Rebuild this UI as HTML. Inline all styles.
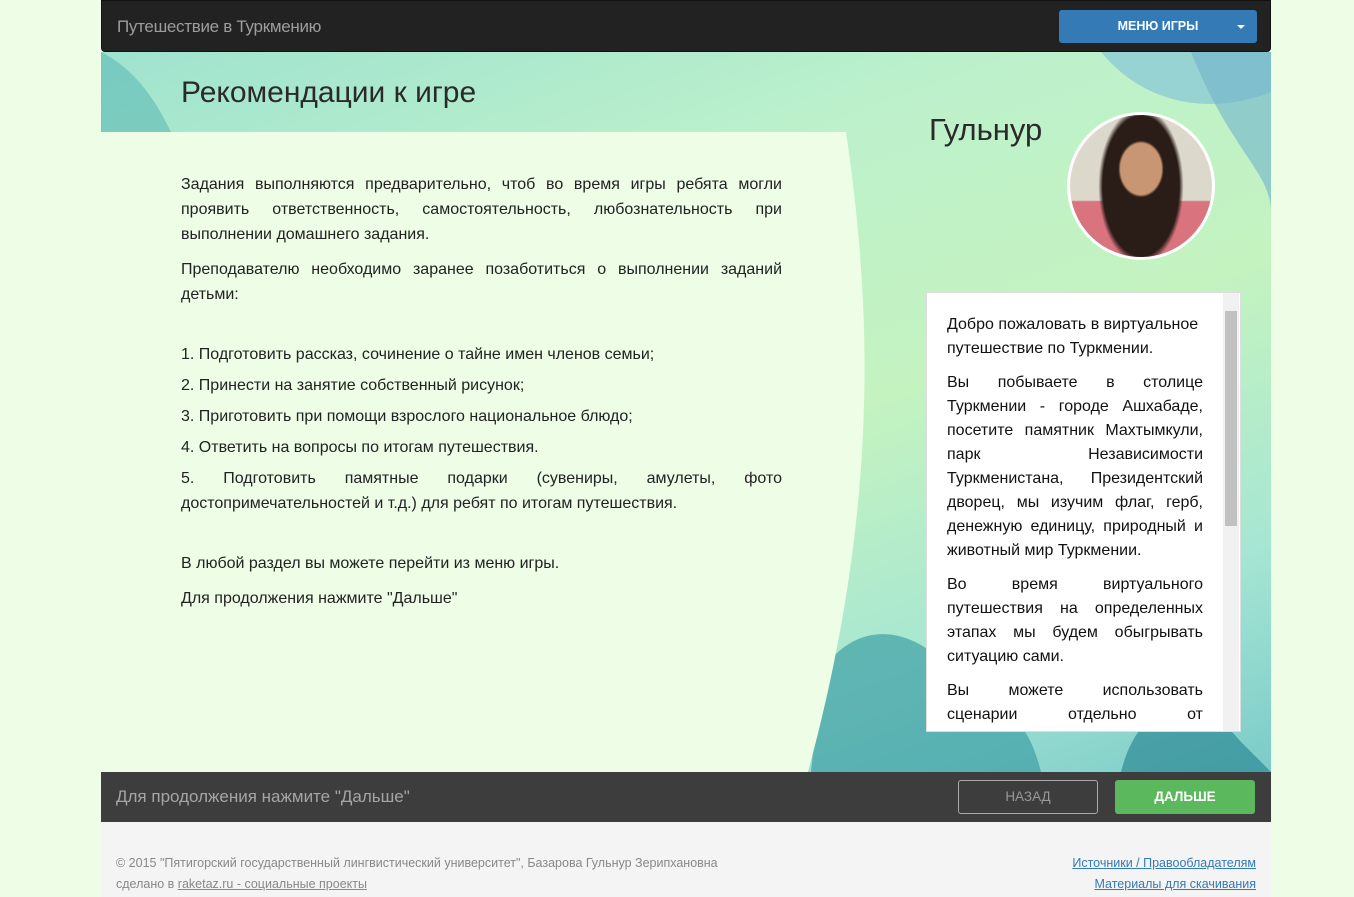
<!DOCTYPE html>
<html><head><meta charset="utf-8"><style>
*{margin:0;padding:0;box-sizing:border-box}
body{width:1354px;height:897px;background:#edfde6;font-family:"Liberation Sans",sans-serif;position:relative;overflow:hidden}
.nav{position:absolute;left:101px;top:0;width:1170px;height:52px;background:#222;border-radius:0 0 4px 4px;border:1px solid #111}
.nav .t{position:absolute;left:15px;top:16px;color:#9d9d9d;font-size:17px;letter-spacing:-0.3px}
.menu{position:absolute;left:957px;top:9px;width:198px;height:33px;background:#337ab7;border-radius:3px;color:#fff;font-size:12.5px;font-weight:bold;text-align:center;line-height:33px}
.menu:after{content:"";position:absolute;right:12px;top:15px;border:4px solid transparent;border-top-color:#fff}
.stage{position:absolute;left:101px;top:52px;width:1170px;height:720px;overflow:hidden;
background:linear-gradient(160deg,#9fe3cf 0%,#bdf1cb 30%,#c4f3c0 55%,#a6e6d3 80%,#7bcbc9 100%)}
.stage svg.bg{position:absolute;left:0;top:0}
h1{position:absolute;left:80px;top:24px;font-weight:normal;font-size:30px;color:#2a2a2a}
.txt{position:absolute;left:80px;top:120px;width:601px;font-size:16px;line-height:25px;color:#222;text-align:justify}
.txt p{margin-bottom:10px}
.txt p.s{margin-bottom:6px}
.name{position:absolute;left:828px;top:60px;font-size:31px;color:#2a2a2a}
.ava{position:absolute;left:966px;top:60px;width:148px;height:148px;border-radius:50%;border:3px solid #fff;background:radial-gradient(ellipse 16% 20% at 50% 38%,#c99673 0 90%,transparent 100%),radial-gradient(ellipse 30% 55% at 50% 50%,#2a1d18 0 90%,transparent 100%),linear-gradient(#ddd8cc 60%,#d9747e 61%);}
.box{position:absolute;left:825px;top:240px;width:315px;height:440px;background:#fff;border:1px solid #ddd;overflow:hidden}
.box .in{position:absolute;left:20px;top:20px;width:256px;font-size:16px;line-height:24px;color:#111;text-align:justify}
.box p{margin-bottom:10px}
.sb{position:absolute;right:1px;top:0;width:16px;height:100%;background:#f1f1f1}
.sb i{position:absolute;left:2px;top:18px;width:12px;height:215px;background:#c1c1c1}
.fb{position:absolute;left:101px;top:772px;width:1170px;height:50px;background:#3d3d3d}
.fb .t{position:absolute;left:15px;top:15px;color:#a5a5a5;font-size:17px}
.b1{position:absolute;left:857px;top:8px;width:140px;height:34px;border:1px solid #aaa;border-radius:3px;color:#999;font-size:13.5px;text-align:center;line-height:32px}
.b2{position:absolute;left:1014px;top:8px;width:140px;height:34px;background:#5cb85c;border-radius:3px;color:#fff;font-weight:bold;font-size:13.5px;text-align:center;line-height:34px}
.ft{position:absolute;left:101px;top:822px;width:1170px;height:75px;background:#f4f4f4;font-size:12.5px;color:#888}
.ft .l{position:absolute;left:15px;top:31px;line-height:21px}
.ft .r{position:absolute;right:15px;top:31px;line-height:21px;text-align:right}
a{color:#337ab7;text-decoration:underline}
.ft .l a{color:#888}
</style></head><body>
<div class="nav"><div class="t">Путешествие в Туркмению</div><div class="menu">МЕНЮ ИГРЫ</div></div>
<div class="stage">
<svg class="bg" width="1170" height="720">
<path d="M1000 0 C1050 60 1120 60 1170 40 V0Z" fill="#86c6d6" opacity=".7"/>
<path d="M1090 0 C1130 100 1170 120 1170 160 V0Z" fill="#6fb3cc" opacity=".6"/>
<path d="M720 620 C760 560 820 580 850 620 C880 660 920 640 940 720 H710Z" fill="#3f9fa5" opacity=".7"/>
<path d="M1020 720 C1040 640 1100 640 1140 690 L1170 720Z" fill="#2e8a95" opacity=".7"/>
<path d="M0 0 C40 20 60 60 70 80 H0Z" fill="#5fb9b5" opacity=".6"/>
<path d="M0 80 H745 C770 250 780 450 707 720 H0Z" fill="#edfde6"/>
</svg>
<h1>Рекомендации к игре</h1>
<div class="txt">
<p>Задания выполняются предварительно, чтоб во время игры ребята могли проявить ответственность, самостоятельность, любознательность при выполнении домашнего задания.</p>
<p>Преподавателю необходимо заранее позаботиться о выполнении заданий детьми:</p>
<p style="height:25px;margin:0"></p>
<p class="s">1. Подготовить рассказ, сочинение о тайне имен членов семьи;</p>
<p class="s">2. Принести на занятие собственный рисунок;</p>
<p class="s">3. Приготовить при помощи взрослого национальное блюдо;</p>
<p class="s">4. Ответить на вопросы по итогам путешествия.</p>
<p>5. Подготовить памятные подарки (сувениры, амулеты, фото достопримечательностей и т.д.) для ребят по итогам путешествия.</p>
<p style="height:25px;margin:0"></p>
<p>В любой раздел вы можете перейти из меню игры.</p>
<p>Для продолжения нажмите "Дальше"</p>
</div>
<div class="name">Гульнур</div>
<div class="ava"></div>
<div class="box"><div class="in">
<p style="text-align:left">Добро пожаловать в виртуальное путешествие по Туркмении.</p>
<p>Вы побываете в столице Туркмении - городе Ашхабаде, посетите памятник Махтымкули, парк Независимости Туркменистана, Президентский дворец, мы изучим флаг, герб, денежную единицу, природный и животный мир Туркмении.</p>
<p>Во время виртуального путешествия на определенных этапах мы будем обыгрывать ситуацию сами.</p>
<p style="text-align-last:justify">Вы можете использовать сценарии отдельно от</p>
</div><div class="sb"><i></i></div></div>
</div>
<div class="fb"><div class="t">Для продолжения нажмите "Дальше"</div><div class="b1">НАЗАД</div><div class="b2">ДАЛЬШЕ</div></div>
<div class="ft"><div class="l">© 2015 "Пятигорский государственный лингвистический университет", Базарова Гульнур Зерипхановна<br>сделано в <a>raketaz.ru - социальные проекты</a></div>
<div class="r"><a>Источники / Правообладателям</a><br><a>Материалы для скачивания</a></div></div>
</body></html>
